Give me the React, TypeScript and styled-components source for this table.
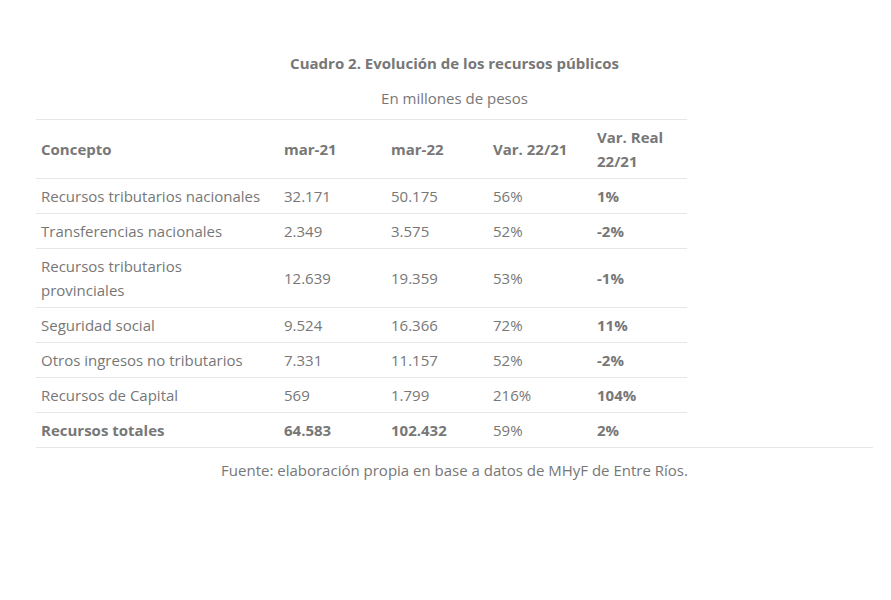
import React from "react";
import styled, { createGlobalStyle } from "styled-components";

const GlobalStyle = createGlobalStyle`
  body {
    margin: 0;
    background: #ffffff;
    font-family: "Open Sans", "Liberation Sans", sans-serif;
    color: #777777;
  }
`;

interface RowTypes {
  concepto: string;
  mar21: string;
  mar22: string;
  variacion: string;
  real: string;
  total?: boolean;
}

const rows: RowTypes[] = [
  { concepto: "Recursos tributarios nacionales", mar21: "32.171", mar22: "50.175", variacion: "56%", real: "1%" },
  { concepto: "Transferencias nacionales", mar21: "2.349", mar22: "3.575", variacion: "52%", real: "-2%" },
  { concepto: "Recursos tributarios provinciales", mar21: "12.639", mar22: "19.359", variacion: "53%", real: "-1%" },
  { concepto: "Seguridad social", mar21: "9.524", mar22: "16.366", variacion: "72%", real: "11%" },
  { concepto: "Otros ingresos no tributarios", mar21: "7.331", mar22: "11.157", variacion: "52%", real: "-2%" },
  { concepto: "Recursos de Capital", mar21: "569", mar22: "1.799", variacion: "216%", real: "104%" },
  { concepto: "Recursos totales", mar21: "64.583", mar22: "102.432", variacion: "59%", real: "2%", total: true },
];

const Figure = styled.figure`
  margin: 0 18px 0 36px;
  padding-top: 52px;
  text-align: center;
`;

const TableTitle = styled.h3`
  margin: 0;
  font-size: 15px;
  line-height: 22px;
  font-weight: 700;
  color: #777777;
`;

const TableSubtitle = styled.p`
  margin: 13px 0 10px;
  font-size: 15px;
  line-height: 22px;
`;

const TableWrapper = styled.div`
  border-bottom: 1px solid #e6e6e6;
  text-align: left;
`;

const Table = styled.table`
  width: 651px;
  table-layout: fixed;
  border-collapse: collapse;
  font-size: 15px;
  line-height: 24px;
`;

const HeaderCell = styled.th<{ $width: number }>`
  box-sizing: border-box;
  width: ${(p) => p.$width}px;
  padding: 5px 14px 5px 5px;
  text-align: left;
  font-weight: 700;
  vertical-align: middle;
  border-top: 1px solid #e6e6e6;
`;

const Row = styled.tr`
  border-top: 1px solid #e6e6e6;
`;

const Cell = styled.td<{ $bold?: boolean }>`
  padding: 5px 14px 5px 5px;
  font-weight: ${(p) => (p.$bold ? 700 : 400)};
  vertical-align: middle;
`;

const Source = styled.figcaption`
  margin-top: 11px;
  font-size: 15px;
  line-height: 22px;
`;

const widths = [243, 107, 102, 104, 95];

export default function App() {
  return (
    <>
      <GlobalStyle />
      <Figure>
        <TableTitle>Cuadro 2. Evolución de los recursos públicos</TableTitle>
        <TableSubtitle>En millones de pesos</TableSubtitle>
        <TableWrapper>
          <Table>
            <thead>
              <tr>
                <HeaderCell $width={widths[0]}>Concepto</HeaderCell>
                <HeaderCell $width={widths[1]}>mar-21</HeaderCell>
                <HeaderCell $width={widths[2]}>mar-22</HeaderCell>
                <HeaderCell $width={widths[3]}>Var. 22/21</HeaderCell>
                <HeaderCell $width={widths[4]}>Var. Real 22/21</HeaderCell>
              </tr>
            </thead>
            <tbody>
              {rows.map((row) => (
                <Row key={row.concepto}>
                  <Cell $bold={row.total}>{row.concepto}</Cell>
                  <Cell $bold={row.total}>{row.mar21}</Cell>
                  <Cell $bold={row.total}>{row.mar22}</Cell>
                  <Cell>{row.variacion}</Cell>
                  <Cell $bold>{row.real}</Cell>
                </Row>
              ))}
            </tbody>
          </Table>
        </TableWrapper>
        <Source>Fuente: elaboración propia en base a datos de MHyF de Entre Ríos.</Source>
      </Figure>
    </>
  );
}
